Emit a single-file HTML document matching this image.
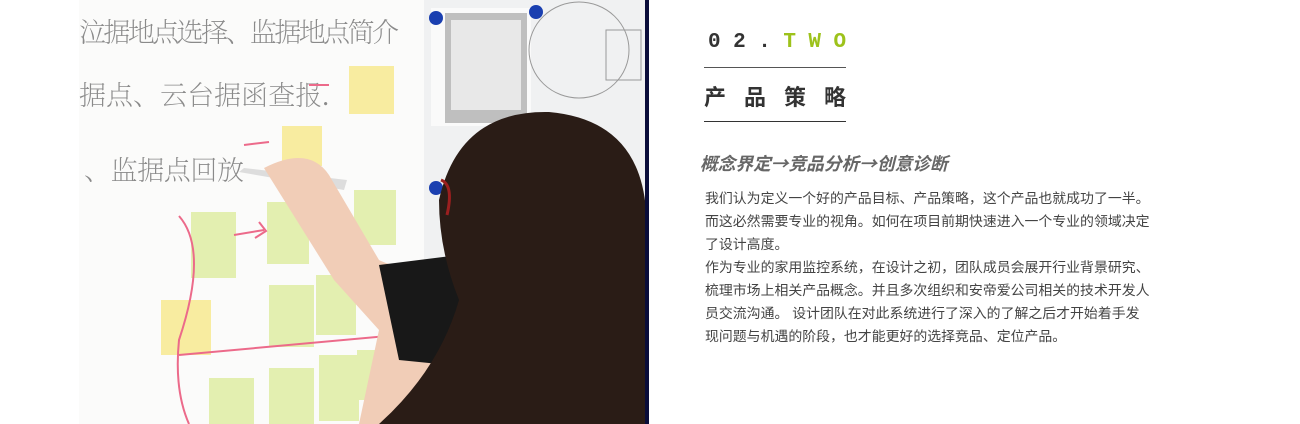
<!DOCTYPE html>
<html><head><meta charset="utf-8"><style>
body{margin:0;width:1300px;height:424px;background:#fff;position:relative;overflow:hidden;font-family:"Liberation Sans","Noto Sans CJK SC",sans-serif}
.a{position:absolute}
</style></head><body>
<svg class="a" style="left:79px;top:0" width="570" height="424" viewBox="0 0 570 424">
<rect width="570" height="424" fill="#fbfbfa"/>
<rect x="345" y="0" width="222" height="424" fill="#f0f1f2"/>
<rect x="352" y="8" width="100" height="118" fill="#fafafa"/>
<rect x="366" y="13" width="82" height="110" fill="#bfbfbf"/>
<rect x="372" y="20" width="70" height="90" fill="#e8e8e8"/>
<ellipse cx="500" cy="50" rx="50" ry="48" fill="none" stroke="#999"/>
<rect x="527" y="30" width="35" height="50" fill="none" stroke="#999"/>
<circle cx="357" cy="18" r="7" fill="#1a3fb0"/><circle cx="457" cy="12" r="7" fill="#1a3fb0"/><circle cx="357" cy="188" r="7" fill="#1a3fb0"/>
<g font-family="Liberation Serif,Noto Serif CJK SC,serif" fill="#8a8a8a" font-size="27" font-weight="200">
<text x="0" y="42" textLength="320">泣据地点选择、监据地点简介</text>
<text x="0" y="105" textLength="250">据点、云台据函查报.</text>
<text x="5" y="180" textLength="160">、监据点回放</text>
</g>
<g fill="#e3efb0">
<rect x="112" y="212" width="45" height="66"/><rect x="188" y="202" width="42" height="62"/><rect x="275" y="190" width="42" height="55"/>
<rect x="190" y="285" width="45" height="62"/><rect x="237" y="275" width="40" height="60"/><rect x="130" y="378" width="45" height="46"/>
<rect x="190" y="368" width="45" height="56"/><rect x="240" y="355" width="40" height="66"/><rect x="278" y="350" width="38" height="50"/>
</g>
<g fill="#f8eca0"><rect x="270" y="66" width="45" height="48"/><rect x="203" y="126" width="40" height="40"/><rect x="82" y="300" width="50" height="55"/></g>
<g fill="none" stroke="#ec6a8a" stroke-width="2"><path d="M100 216 Q130 250 100 340 Q95 390 110 424"/><path d="M100 355 L320 335"/><path d="M155 235 L185 230 M180 222 L187 231 L176 238"/><path d="M230 85 L250 85"/><path d="M165 145 L190 142"/></g>
<path d="M160 172 L265 190 L268 180 L165 168Z" fill="#ddd"/>
<path d="M185 168 Q230 145 250 175 L300 260 Q320 270 360 270 L400 400 L330 424 L280 424 L300 330 L255 280 L205 200 Z" fill="#f1cdb7"/>
<path d="M300 265 L380 255 L420 370 L320 360 Z" fill="#181818"/>
<path d="M360 200 Q380 110 470 112 Q560 120 567 210 L567 424 L300 424 Q360 370 380 300 Q360 250 360 200Z" fill="#2a1c16"/>
<path d="M362 180 Q375 185 368 215" fill="none" stroke="#9b1f1f" stroke-width="3"/>
<rect x="566" y="0" width="4" height="424" fill="#0a0d3a"/>
</svg>
<div class="a" style="left:708px;top:31px;font-size:21px;font-weight:bold;letter-spacing:12.5px;color:#333;font-family:'Liberation Mono',monospace">02.<span style="color:#9dc21b">TWO</span></div>
<div class="a" style="left:704px;top:67px;width:142px;height:1px;background:#555"></div>
<div class="a" style="left:704px;top:80px;font-size:22px;font-weight:bold;letter-spacing:18px;color:#333">产品策略</div>
<div class="a" style="left:704px;top:121px;width:142px;height:1px;background:#333"></div>
<div class="a" style="left:700px;top:150px;font-size:17.7px;font-weight:bold;font-style:italic;color:#666;font-family:'Noto Sans CJK SC',sans-serif">概念界定→竞品分析→创意诊断</div>
<div class="a" style="left:705px;top:187px;width:480px;font-size:13.9px;line-height:23px;color:#444">我们认为定义一个好的产品目标、产品策略，这个产品也就成功了一半。<br>而这必然需要专业的视角。如何在项目前期快速进入一个专业的领域决定<br>了设计高度。<br>作为专业的家用监控系统，在设计之初，团队成员会展开行业背景研究、<br>梳理市场上相关产品概念。并且多次组织和安帝爱公司相关的技术开发人<br>员交流沟通。 设计团队在对此系统进行了深入的了解之后才开始着手发<br>现问题与机遇的阶段，也才能更好的选择竞品、定位产品。</div>
</body></html>
